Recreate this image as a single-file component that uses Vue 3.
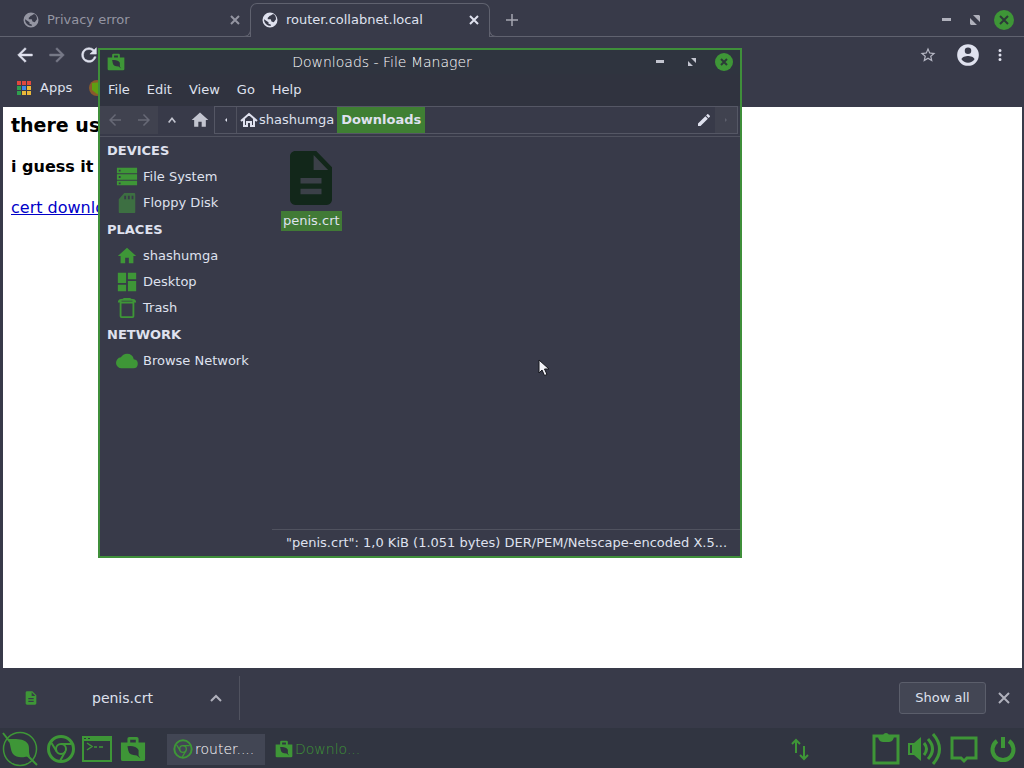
<template>
  <div class="desktop">
    <div class="browser">
      <div class="tab-strip">
        <div class="tab">
          <svg class="icon-18" viewBox="0 0 24 24"><path :d="icons.globe" fill-rule="evenodd" /></svg>
          <span class="tab-title">Privacy error</span>
          <button class="btn-icon" aria-label="Close tab">
            <svg class="icon-10" viewBox="0 0 10 10"><path class="line" d="M1 1l8 8M9 1l-8 8" /></svg>
          </button>
        </div>
        <div class="tab active">
          <svg class="icon-18" viewBox="0 0 24 24"><path :d="icons.globe" fill-rule="evenodd" /></svg>
          <span class="tab-title">router.collabnet.local</span>
          <button class="btn-icon" aria-label="Close tab">
            <svg class="icon-10" viewBox="0 0 10 10"><path class="line" d="M1 1l8 8M9 1l-8 8" /></svg>
          </button>
        </div>
        <button class="btn-icon btn-new" aria-label="New tab">
          <svg class="icon-12" viewBox="0 0 12 12"><path class="line thin" d="M6 0v12M0 6h12" /></svg>
        </button>
        <div class="window-buttons">
          <button class="btn-icon" aria-label="Minimize">
            <svg class="icon-20" viewBox="0 0 20 20"><path d="M6 8h9v3H6z" /></svg>
          </button>
          <button class="btn-icon" aria-label="Restore">
            <svg class="icon-20" viewBox="0 0 20 20"><path d="M8 5h6l1 1v6zM5 8v6l1 1h6z" /></svg>
          </button>
          <button class="btn-icon" aria-label="Close window">
            <svg class="icon-20" viewBox="0 0 20 20">
              <circle class="green" cx="10" cy="10" r="10" />
              <path class="cross" d="M6 6l8 8M14 6l-8 8" />
            </svg>
          </button>
        </div>
      </div>

      <div class="toolbar">
        <button class="btn-icon nav" aria-label="Back">
          <svg class="icon-22" viewBox="0 0 24 24"><path :d="icons.back" /></svg>
        </button>
        <button class="btn-icon nav dim" aria-label="Forward">
          <svg class="icon-22" viewBox="0 0 24 24"><path :d="icons.forward" /></svg>
        </button>
        <button class="btn-icon nav" aria-label="Reload">
          <svg class="icon-22" viewBox="0 0 24 24"><path :d="icons.reload" /></svg>
        </button>
        <div class="toolbar-right">
          <button class="btn-icon star" aria-label="Bookmark this page">
            <svg class="icon-18" viewBox="0 0 24 24"><path :d="icons.star" /></svg>
          </button>
          <button class="btn-icon" aria-label="Profile">
            <svg class="icon-26" viewBox="0 0 24 24"><path :d="icons.account" /></svg>
          </button>
          <button class="btn-icon" aria-label="Menu">
            <svg class="icon-18" viewBox="0 0 24 24"><path :d="icons.dots" /></svg>
          </button>
        </div>
      </div>

      <div class="bookmarks">
        <a href="#" class="bookmark">
          <svg class="icon-14" viewBox="0 0 14 14">
            <path fill="#e0483e" d="M0 0h4v4H0zM5 0h4v4H5zM10 0h4v4h-4z" />
            <path fill="#2f9f4e" d="M0 5h4v4H0zM0 10h4v4H0z" />
            <path fill="#3f86e8" d="M5 5h4v4H5z" />
            <path fill="#eab83a" d="M10 5h4v4h-4zM5 10h4v4H5zM10 10h4v4h-4z" />
          </svg>
          Apps
        </a>
        <a href="#" class="bookmark" aria-label="Bookmark">
          <svg class="icon-16" viewBox="0 0 16 16">
            <circle cx="8" cy="8" r="8" fill="#8a5a2c" />
            <path fill="#5f9f12" d="M3 3l10-1v10l-5 2-5-4z" />
          </svg>
        </a>
      </div>

      <main class="page">
        <h3>there us</h3>
        <p><b>i guess it</b></p>
        <p><a href="#">cert download</a></p>
      </main>

      <div class="downloads">
        <div class="download-item">
          <svg class="icon-16 green" viewBox="0 0 24 24"><path :d="icons.file" /></svg>
          <span class="download-name">penis.crt</span>
          <button class="btn-icon soft" aria-label="Download options">
            <svg class="icon-12" viewBox="0 0 12 12"><path class="line" d="M1 9l5-5 5 5" /></svg>
          </button>
        </div>
        <button class="btn-show">Show all</button>
        <button class="btn-icon btn-dismiss soft" aria-label="Close downloads bar">
          <svg class="icon-12" viewBox="0 0 12 12"><path class="line" d="M1 1l10 10M11 1L1 11" /></svg>
        </button>
      </div>
    </div>

    <section class="manager">
      <header class="titlebar">
        <svg class="icon-18 green" viewBox="0 0 28 28">
          <path :d="icons.bag" />
          <path class="cutout" :d="icons.bagLeaf" />
        </svg>
        <span class="title">Downloads - File Manager</span>
        <div class="title-buttons">
          <button class="btn-icon" aria-label="Minimize">
            <svg class="icon-18" viewBox="0 0 18 18"><path d="M5 7h8v3H5z" /></svg>
          </button>
          <button class="btn-icon" aria-label="Restore">
            <svg class="icon-18" viewBox="0 0 18 18"><path d="M8 5h5v5zM5 8v5h5z" /></svg>
          </button>
          <button class="btn-icon" aria-label="Close">
            <svg class="icon-18" viewBox="0 0 18 18">
              <circle class="green" cx="9" cy="9" r="9" />
              <path class="cross" d="M6 6l6 6M12 6l-6 6" />
            </svg>
          </button>
        </div>
      </header>

      <nav class="menubar">
        <button v-for="item in menu" :key="item">{{ item }}</button>
      </nav>

      <div class="location">
        <div class="history">
          <button class="btn-icon" aria-label="Back">
            <svg class="icon-18" viewBox="0 0 24 24"><path :d="icons.back" /></svg>
          </button>
          <button class="btn-icon" aria-label="Forward">
            <svg class="icon-18" viewBox="0 0 24 24"><path :d="icons.forward" /></svg>
          </button>
        </div>
        <button class="btn-icon btn-loc" aria-label="Parent folder">
          <svg class="icon-10" viewBox="0 0 12 12"><path class="line" d="M2 9l4-5 4 5" /></svg>
        </button>
        <button class="btn-icon btn-loc" aria-label="Home">
          <svg class="icon-20" viewBox="0 0 24 24"><path :d="icons.home" /></svg>
        </button>
        <div class="pathbar">
          <button class="btn-icon btn-scroll" aria-label="Scroll left">
            <svg class="icon-10" viewBox="0 0 10 10"><path d="M6 3v4L4 5z" /></svg>
          </button>
          <button class="crumb">
            <svg class="icon-18" viewBox="0 0 18 18">
              <path class="outline" d="M1 10l8-7 8 7M4 8v7h3v-4h4v4h3V8" />
            </svg>
            shashumga
          </button>
          <button class="crumb current">Downloads</button>
          <button class="btn-icon btn-edit" aria-label="Edit path">
            <svg class="icon-16" viewBox="0 0 24 24"><path :d="icons.pencil" /></svg>
          </button>
          <button class="btn-icon btn-end" aria-label="Scroll right">
            <svg class="icon-10" viewBox="0 0 10 10"><path d="M4 3v4l2-2z" /></svg>
          </button>
        </div>
      </div>

      <div class="manager-body">
        <aside class="sidebar">
          <div v-for="group in places" :key="group.name">
            <h4>{{ group.name }}</h4>
            <a v-for="place in group.items" :key="place.label" href="#" class="place">
              <svg class="place-icon" :class="{ faded: place.faded }" viewBox="0 0 24 24">
                <path :d="icons[place.icon]" fill-rule="evenodd" />
              </svg>
              {{ place.label }}
            </a>
          </div>
        </aside>
        <div class="content">
          <div class="files">
            <a href="#" class="file">
              <svg class="file-icon" viewBox="4 2 16 20" preserveAspectRatio="none">
                <path class="file-lines" d="M7 11h10v8H7z" />
                <path class="file-fold" d="M12 3h3l4 5v2h-7z" />
                <path :d="icons.file" />
              </svg>
              <span>penis.crt</span>
            </a>
          </div>
          <div class="status">"penis.crt": 1,0 KiB (1.051 bytes) DER/PEM/Netscape-encoded X.5...</div>
        </div>
      </div>
    </section>

    <footer class="panel">
      <div class="launchers">
        <button class="btn-icon launcher start" aria-label="Applications">
          <svg class="icon-36" viewBox="0 0 36 36">
            <circle class="ring thin" cx="18" cy="18" r="16.500" />
            <path d="M6 8c8 0 16-1 20 5 2 4 0 8 2 12-5 1-13 3-17-2-3-4-2-10-5-15z" />
            <path class="ring" d="M1 2l7 9M24 23l11 11" />
          </svg>
        </button>
        <button class="btn-icon launcher" aria-label="Chromium">
          <svg class="icon-30" viewBox="0 0 30 30">
            <circle class="ring thick" cx="15" cy="15" r="12.500" />
            <circle class="ring" cx="15" cy="15" r="5" />
            <path class="ring" d="M15 10h10M10.700 17.500L5.500 9M19.300 17.500L14 27" />
          </svg>
        </button>
        <button class="btn-icon launcher" aria-label="Terminal">
          <svg class="icon-30" viewBox="0 0 30 30">
            <path class="ring" d="M1 3h28v24H1z" />
            <path d="M0 2h30v5H0z" />
            <path class="ring thin" d="M5 9l5 3.500L5 16M12 13h3M17 13h4" />
            <path class="cutout" d="M2 4h2v1H2zM6 4h2v1H6z" />
          </svg>
        </button>
        <button class="btn-icon launcher" aria-label="Files">
          <svg class="icon-26" viewBox="0 0 28 28">
            <path :d="icons.bag" />
            <path class="cutout" :d="icons.bagLeaf" />
          </svg>
        </button>
      </div>

      <div class="tasks">
        <button class="task active">
          <svg class="icon-20" viewBox="0 0 30 30">
            <circle class="ring thick" cx="15" cy="15" r="13" />
            <circle class="ring" cx="15" cy="15" r="5" />
            <path class="ring" d="M15 10h10M10.700 17.500L5.500 9M19.300 17.500L14 27" />
          </svg>
          router....
        </button>
        <button class="task">
          <svg class="icon-18" viewBox="0 0 28 28">
            <path :d="icons.bag" />
            <path class="cutout" :d="icons.bagLeaf" />
          </svg>
          Downlo...
        </button>
      </div>

      <div class="tray">
        <button class="btn-icon btn-net" aria-label="Network">
          <svg class="icon-24" viewBox="0 0 24 24">
            <path class="ring" d="M8 16V3M4 7l4-4 4 4M16 9v13M12 18l4 4 4-4" />
          </svg>
        </button>
        <button class="btn-icon" aria-label="Clipboard">
          <svg class="icon-34" viewBox="0 0 34 34">
            <path class="ring thick" d="M5 4h24v27H5z" />
            <path d="M9 4h5c0-4 6-4 6 0h5c0 3-2 6-5 6h-6c-3 0-5-3-5-6z" />
          </svg>
        </button>
        <button class="btn-icon" aria-label="Volume">
          <svg class="icon-34" viewBox="0 0 34 34">
            <path class="ring" d="M1 12h4v10H1z" />
            <path d="M6 11l7-6v24l-7-6z" />
            <path class="ring thick" d="M16 11q5 6 0 12M20 7q9 10 0 20M25 2q13 15 0 30" />
          </svg>
        </button>
        <button class="btn-icon" aria-label="Notifications">
          <svg class="icon-34" viewBox="0 0 34 34">
            <path class="ring wide" d="M5 6h24v20h-9l-3 3-3-3H5z" />
          </svg>
        </button>
        <button class="btn-icon" aria-label="Power">
          <svg class="icon-34" viewBox="0 0 34 34">
            <path class="ring power" d="M11 9a10.500 10.500 0 1 0 12 0M17 5v11" />
          </svg>
        </button>
      </div>
    </footer>

    <svg class="cursor" viewBox="0 0 12 18">
      <path d="M1 1v13l3-3 2.500 5.500 2.500-1L6.500 10H11z" />
    </svg>
  </div>
</template>

<script setup>
const menu = ['File', 'Edit', 'View', 'Go', 'Help']

const places = [
  {
    name: 'DEVICES',
    items: [
      { label: 'File System', icon: 'drive' },
      { label: 'Floppy Disk', icon: 'card', faded: true }
    ]
  },
  {
    name: 'PLACES',
    items: [
      { label: 'shashumga', icon: 'home' },
      { label: 'Desktop', icon: 'tiles' },
      { label: 'Trash', icon: 'trash' }
    ]
  },
  {
    name: 'NETWORK',
    items: [{ label: 'Browse Network', icon: 'cloud' }]
  }
]

const icons = {
  globe: 'M12 2a10 10 0 1 0 0 20 10 10 0 0 0 0-20zM4 11l6 4v2l3 1v2c-5 0-9-4-9-9zM9 9c2-1 2-3 4-3l3-2c3 1 4 4 4 7l-3 4-3-1-1-3H9z',
  back: 'M20 11H7.830l5.590-5.590L12 4l-8 8 8 8 1.410-1.410L7.830 13H20v-2z',
  forward: 'M12 4l-1.410 1.410L16.170 11H4v2h12.170l-5.580 5.590L12 20l8-8z',
  reload: 'M17.650 6.350A7.960 7.960 0 0 0 12 4a8 8 0 1 0 7.730 10h-2.080A6 6 0 1 1 12 6c1.660 0 3.140.690 4.220 1.780L13 11h7V4l-2.350 2.350z',
  star: 'M22 9.240l-7.190-.620L12 2 9.190 8.630 2 9.240l5.460 4.730L5.820 21 12 17.270 18.180 21l-1.630-7.030L22 9.240zM12 15.400l-3.760 2.270 1-4.280-3.320-2.880 4.380-.380L12 6.100l1.710 4.040 4.380.380-3.320 2.880 1 4.280L12 15.400z',
  account: 'M12 2a10 10 0 1 0 0 20 10 10 0 0 0 0-20zm0 3a3 3 0 1 1 0 6 3 3 0 0 1 0-6zm0 14.200a7.200 7.200 0 0 1-6-3.220c.030-1.990 4-3.080 6-3.080s5.970 1.090 6 3.080a7.200 7.200 0 0 1-6 3.220z',
  dots: 'M12 8a2 2 0 1 0 0-4 2 2 0 0 0 0 4zm0 2a2 2 0 1 0 0 4 2 2 0 0 0 0-4zm0 6a2 2 0 1 0 0 4 2 2 0 0 0 0-4z',
  file: 'M14 2H6c-1.100 0-2 .900-2 2v16c0 1.100.900 2 2 2h12c1.100 0 2-.900 2-2V8l-6-6zm2 16H8v-2h8v2zm0-4H8v-2h8v2zm-3-5V3.500L18.500 9H13z',
  home: 'M10 20v-6h4v6h5v-8h3L12 3 2 12h3v8z',
  pencil: 'M3 17.250V21h3.750L17.810 9.940l-3.750-3.750L3 17.250zM20.710 7.040a1 1 0 0 0 0-1.410l-2.340-2.340a1 1 0 0 0-1.410 0l-1.830 1.830 3.750 3.750 1.830-1.830z',
  drive: 'M1 2h22v6H1zM1 9h22v6H1zM1 16h22v5H1zM3 4v2h2V4zM3 11v2h2v-2zM3 18v2h2v-2z',
  card: 'M9 1h11c1 0 1 1 1 2v19c0 1-1 1-1 1H4c-1 0-1-1-1-2V8zM9 4v4h2V4zM13 4v4h2V4zM17 4v4h2V4z',
  tiles: 'M2 2h9v11H2zM13 2h9v7h-9zM2 15h9v7H2zM13 11h9v11h-9z',
  trash: 'M8 1h8v1c4 0 6 1 6 4H2c0-3 2-4 6-4zM4 6h16v15q0 2-2 2H6q-2 0-2-2zM6 7v14h12V7zM6 4v1h12V4z',
  cloud: 'M19.350 10.040A7.490 7.490 0 0 0 12 4C9.110 4 6.600 5.640 5.350 8.040A6 6 0 0 0 6 20h13a5 5 0 0 0 .350-9.960z',
  bag: 'M1 7h7V3q0-2 2-2h8q2 0 2 2v4h7v18q0 2-2 2H3q-2 0-2-2zM11 4v3h6V4z',
  bagLeaf: 'M8 11q9-1 12 4v6l2 3-4-3q-8 0-9-5z'
}
</script>

<style>
body {
  background: #383a49;
}
</style>

<style scoped>
.desktop {
  position: relative;
  display: flex;
  flex-direction: column;
  min-height: 100vh;
  overflow: hidden;
  background: #383a49;
  color: #dfe1ee;
  font-family: "DejaVu Sans", sans-serif;
  font-size: 13px;
  line-height: 20px;
}

button {
  border: none;
  padding: 0;
  background: none;
  color: inherit;
  font: inherit;
  cursor: pointer;
}

a {
  color: inherit;
  text-decoration: none;
}

svg {
  display: block;
  flex: none;
  fill: currentColor;
}

.btn-icon {
  display: flex;
  align-items: center;
  justify-content: center;
}

.soft {
  color: #b0b1bc;
}

.icon-10 { width: 10px; height: 10px; }
.icon-12 { width: 12px; height: 12px; }
.icon-14 { width: 14px; height: 14px; }
.icon-16 { width: 16px; height: 16px; }
.icon-18 { width: 18px; height: 18px; }
.icon-20 { width: 20px; height: 20px; }
.icon-22 { width: 22px; height: 22px; }
.icon-24 { width: 24px; height: 24px; }
.icon-26 { width: 26px; height: 26px; }
.icon-30 { width: 30px; height: 30px; }
.icon-34 { width: 34px; height: 34px; }
.icon-36 { width: 36px; height: 36px; }

.line {
  fill: none;
  stroke: currentColor;
  stroke-width: 2;
}

.line.thin {
  stroke-width: 1.5;
}

.green {
  fill: #3e9637;
}

.cross {
  fill: none;
  stroke: #2c3a38;
  stroke-width: 2;
}

.cutout {
  fill: #30343f;
}

/* browser */
.browser {
  flex: 1;
  display: flex;
  flex-direction: column;
}

.tab-strip {
  display: flex;
  align-items: flex-end;
  height: 36px;
  border-bottom: 1px solid #60626f;
}

.tab {
  flex: 0 0 250px;
  box-sizing: border-box;
  display: flex;
  align-items: center;
  gap: 7px;
  height: 34px;
  padding: 2px 10px 0 22px;
  color: #9495a2;
}

.tab.active {
  position: relative;
  flex-basis: 240px;
  margin-bottom: -1px;
  padding: 0 10px 2px;
  border: 1px solid #60626f;
  border-bottom: none;
  border-radius: 7px 7px 0 0;
  background: #383a49;
  color: #dfe1ee;
}

.tab.active::before,
.tab.active::after {
  content: "";
  position: absolute;
  bottom: 0;
  width: 6px;
  height: 6px;
  border-bottom: 1px solid #60626f;
  background: #383a49;
}

.tab.active::before {
  right: 100%;
  border-right: 1px solid #60626f;
  border-bottom-right-radius: 7px;
}

.tab.active::after {
  left: 100%;
  border-left: 1px solid #60626f;
  border-bottom-left-radius: 7px;
}

.tab-title {
  flex: 1;
}

.btn-new {
  width: 44px;
  height: 32px;
  color: #a5a6b1;
}

.window-buttons {
  display: flex;
  gap: 9px;
  margin-left: auto;
  padding: 0 10px 6px 0;
  color: #b0b1bc;
}

.toolbar {
  display: flex;
  align-items: center;
  gap: 10px;
  height: 36px;
  padding: 0 15px 0 14px;
}

.nav svg {
  stroke: currentColor;
  stroke-width: 0.6;
}

.nav.dim {
  color: #777987;
}

.toolbar-right {
  display: flex;
  align-items: center;
  gap: 10px;
  margin-left: auto;
}

.star {
  margin-right: 8px;
  color: #b6b7c4;
}

.bookmarks {
  display: flex;
  align-items: center;
  gap: 17px;
  height: 30px;
  padding: 0 18px 4px 17px;
}

.bookmark {
  display: flex;
  align-items: center;
  gap: 9px;
}

.page {
  flex: 1;
  margin: 0 2px 0 3px;
  padding: 8px;
  background: #ffffff;
  color: #000000;
  font-size: 16px;
  line-height: 21px;
}

.page h3 {
  margin: 0 0 20px;
  font-size: 19px;
}

.page p {
  margin: 0 0 20px;
}

.page a {
  color: #0000c8;
  text-decoration: underline;
}

.downloads {
  display: flex;
  align-items: center;
  height: 60px;
  padding-right: 14px;
}

.download-item {
  flex: 0 0 240px;
  box-sizing: border-box;
  display: flex;
  align-items: center;
  height: 44px;
  padding: 0 17px 0 23px;
  border-right: 1px solid #50525f;
}

.download-name {
  flex: 1;
  padding-left: 53px;
  font-size: 14px;
}

.btn-show {
  width: 87px;
  height: 32px;
  margin-left: auto;
  border: 1px solid #5b5e6b;
  border-radius: 3px;
  background: #434654;
}

.btn-dismiss {
  margin-left: 12px;
}

/* file manager window */
.manager {
  position: absolute;
  top: 48px;
  left: 98px;
  box-sizing: border-box;
  display: flex;
  flex-direction: column;
  width: 644px;
  height: 510px;
  border: 2px solid #3f8f3a;
  background: #383a49;
}

.titlebar {
  display: flex;
  align-items: center;
  height: 24px;
  padding: 0 7px;
  background: #2f343f;
}

.title {
  flex: 1;
  padding-right: 12px;
  text-align: center;
  font-size: 14px;
  font-weight: 200;
  color: #ffffff;
}

.title-buttons {
  display: flex;
  gap: 14px;
  color: #c3c5d0;
}

.menubar {
  display: flex;
  gap: 17px;
  height: 32px;
  padding: 0 8px;
  background: #30333f;
}

.location {
  display: flex;
  height: 30px;
  border-bottom: 1px solid #50525f;
}

.history {
  display: flex;
  height: 28px;
  background: #40424f;
  color: #676976;
}

.history button {
  width: 29px;
}

.btn-loc {
  width: 28px;
  height: 28px;
  color: #c3c5d0;
}

.pathbar {
  flex: 1;
  display: flex;
  height: 26px;
  margin-right: 2px;
  border: 1px solid #555765;
}

.btn-scroll {
  width: 22px;
  border-right: 1px solid #50525f;
}

.crumb {
  display: flex;
  align-items: center;
  gap: 1px;
  padding: 0 3px;
}

.crumb.current {
  padding: 0 4px;
  background: #3f7f33;
  font-weight: bold;
}

.outline {
  fill: none;
  stroke: currentColor;
  stroke-width: 2;
}

.btn-edit {
  margin-left: auto;
  padding: 0 3px;
}

.btn-end {
  width: 22px;
  background: #40424f;
  color: #5d5f6c;
}

.manager-body {
  flex: 1;
  display: flex;
}

.sidebar {
  width: 172px;
}

.sidebar h4 {
  margin: 0;
  padding-left: 7px;
  font-size: 13px;
  line-height: 27px;
}

.place {
  display: flex;
  align-items: center;
  gap: 5px;
  height: 26px;
  padding-left: 16px;
}

.place-icon {
  width: 22px;
  height: 22px;
  fill: #3e9637;
}

.place-icon.faded {
  fill: #3d6f42;
}

.content {
  flex: 1;
  display: flex;
  flex-direction: column;
}

.files {
  flex: 1;
  padding: 14px 9px;
}

.file {
  display: inline-flex;
  flex-direction: column;
  align-items: center;
  gap: 6px;
}

.file-icon {
  width: 42px;
  height: 54px;
  fill: #12271a;
}

.file-lines,
.file-fold {
  fill: #3b4048;
}

.file span {
  padding: 0 2px;
  background: #417a36;
}

.status {
  height: 26px;
  border-top: 1px solid #50525f;
  padding-left: 14px;
  line-height: 26px;
  white-space: nowrap;
}

/* bottom panel */
.panel {
  box-sizing: border-box;
  display: flex;
  align-items: center;
  height: 40px;
  padding: 2px 4px 0 2px;
  background: #313541;
  color: #3e9637;
}

.launchers {
  display: flex;
}

.launcher {
  width: 36px;
}

.launcher.start {
  margin-right: 5px;
}

.ring {
  fill: none;
  stroke: currentColor;
  stroke-width: 2;
}

.ring.thin {
  stroke-width: 1.5;
}

.ring.thick,
.ring.wide {
  stroke-width: 3;
}

.ring.power {
  stroke-width: 4;
}

.tasks {
  display: flex;
  gap: 4px;
  margin-left: 16px;
}

.task {
  display: flex;
  align-items: center;
  box-sizing: border-box;
  gap: 2px;
  min-width: 98px;
  height: 31px;
  padding: 0 6px;
  font-size: 14px;
  font-weight: 200;
  color: #3e9637;
}

.task.active {
  background: #424654;
  color: #ffffff;
}

.task.active svg {
  color: #3e9637;
}

.tray {
  display: flex;
  align-items: center;
  gap: 5px;
  margin-left: auto;
}

.btn-net {
  margin-right: 52px;
}

.cursor {
  position: absolute;
  top: 359px;
  left: 538px;
  width: 12px;
  height: 18px;
  fill: #f2f2f8;
  stroke: #15161c;
  stroke-width: 1;
}
</style>
